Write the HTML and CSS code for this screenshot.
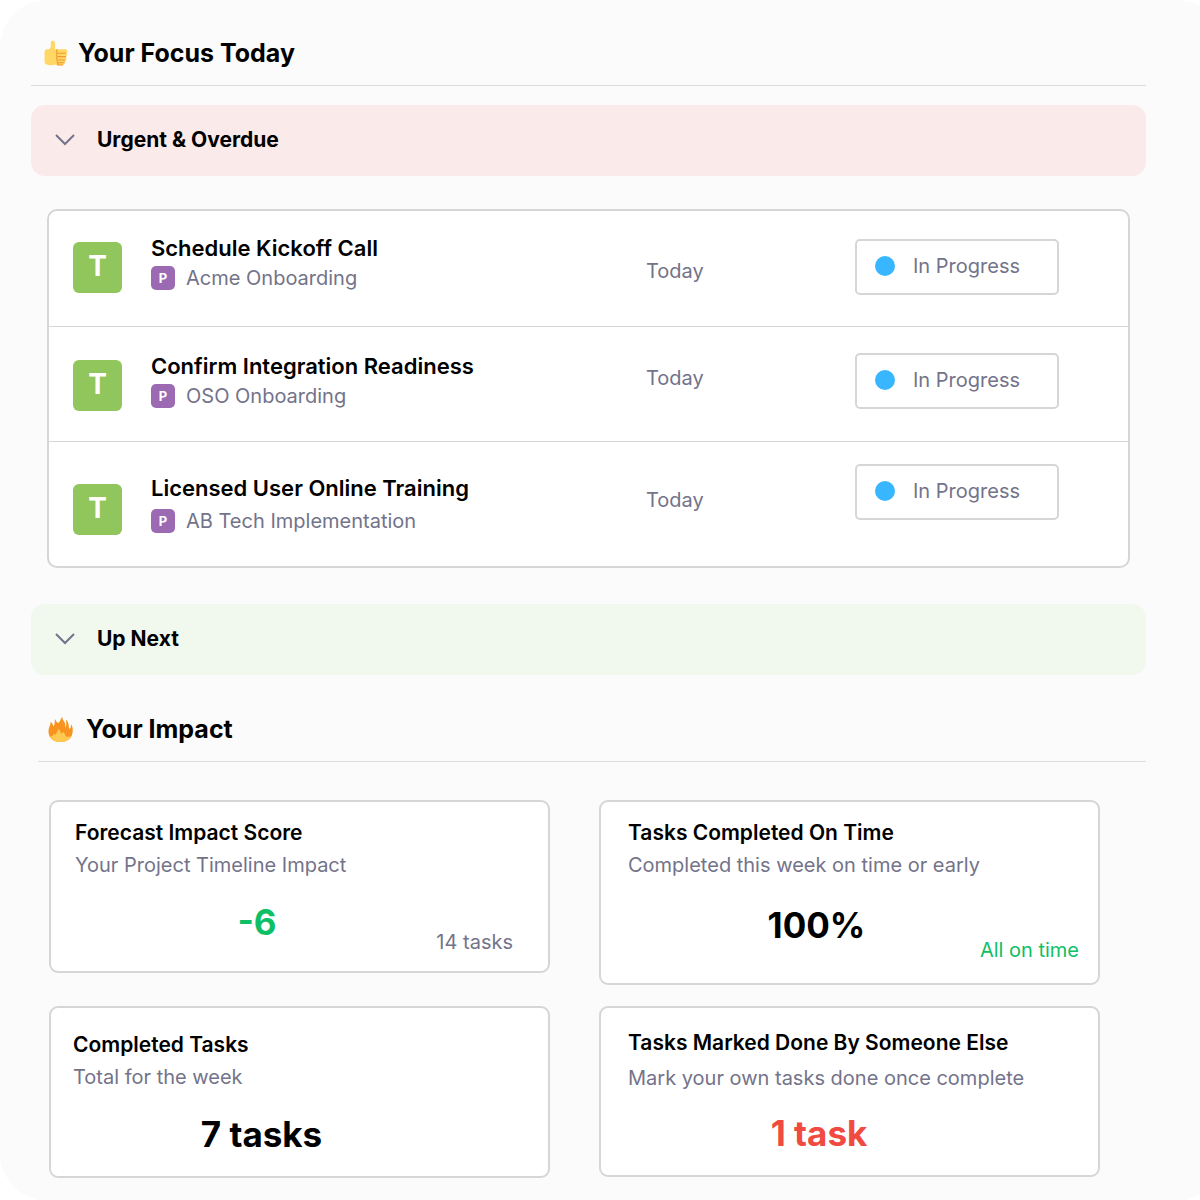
FILE: index.html
```
<!DOCTYPE html>
<html lang="en">
<head>
    <meta charset="UTF-8">
    <meta name="viewport" content="width=device-width, initial-scale=1.0">
    <title>Your Focus Today</title>
    <link rel="stylesheet" href="styles.css">
</head>
<body>
    <main class="panel">
        <!-- Focus Section -->
        <section>
            <header class="section-header">
                <svg class="section-icon" viewBox="0 0 24 24" aria-hidden="true">
                    <path fill="#ffd764" d="M1.500 11.500C1.500 8.800 2.500 8 4 8h1.700C7.100 7 7.500 6 7.500 4.500V1.700C7.500-1 11.600-.8 11.600 2.300V8h9.600c2.800 0 2.900 3.500.9 3.800 1.600.6 1.400 3-.3 3.200 1.400.7 1 2.900-.5 3.100.9.700.5 2.500-.8 2.700.3 1.500-.6 2.400-1.900 2.400H13l-1.300-.7c-1.300.5-3 .7-5 .7-3.700 0-5.200-.9-5.200-3.900Z"/>
                    <path fill="none" stroke="#f29a2e" stroke-width="1" stroke-linecap="round" d="M14 8.500c-1.500.3-1.600 2.700.1 3.200h7.800M14.200 11.800c-1.800.4-1.800 2.800 0 3.200h7.400M14.200 15.200c-1.700.4-1.600 2.600.1 3h6.900M14.500 18.300c-1.500.4-1.300 2.300.2 2.600h5.700M14.500 21c-.8.600-.6 1.800.3 2.100h4"/>
                </svg>
                <h1 class="section-title">Your Focus Today</h1>
            </header>

            <button type="button" class="group-bar urgent" aria-expanded="true" aria-controls="urgentTasks">
                <svg class="chevron" viewBox="0 0 20 12" aria-hidden="true"><path d="M1 1l9 9 9-9"/></svg>
                <span>Urgent &amp; Overdue</span>
            </button>

            <ul class="task-list" id="urgentTasks">
                <li class="task task-first">
                    <div class="task-main">
                        <span class="task-badge">T</span>
                        <div class="task-text">
                            <h2 class="item-title">Schedule Kickoff Call</h2>
                            <p class="project"><span class="project-badge">P</span>Acme Onboarding</p>
                        </div>
                    </div>
                    <span class="task-date">Today</span>
                    <div class="task-status">
                        <button type="button" class="status"><span class="dot"></span>In Progress</button>
                    </div>
                </li>
                <li class="task task-middle">
                    <div class="task-main">
                        <span class="task-badge">T</span>
                        <div class="task-text">
                            <h2 class="item-title">Confirm Integration Readiness</h2>
                            <p class="project"><span class="project-badge">P</span>OSO Onboarding</p>
                        </div>
                    </div>
                    <span class="task-date">Today</span>
                    <div class="task-status">
                        <button type="button" class="status"><span class="dot"></span>In Progress</button>
                    </div>
                </li>
                <li class="task task-last">
                    <div class="task-main">
                        <span class="task-badge">T</span>
                        <div class="task-text">
                            <h2 class="item-title">Licensed User Online Training</h2>
                            <p class="project"><span class="project-badge">P</span>AB Tech Implementation</p>
                        </div>
                    </div>
                    <span class="task-date">Today</span>
                    <div class="task-status">
                        <button type="button" class="status"><span class="dot"></span>In Progress</button>
                    </div>
                </li>
            </ul>

            <button type="button" class="group-bar next" aria-expanded="false">
                <svg class="chevron" viewBox="0 0 20 12" aria-hidden="true"><path d="M1 1l9 9 9-9"/></svg>
                <span>Up Next</span>
            </button>
        </section>

        <!-- Impact Section -->
        <section class="impact">
            <header class="section-header">
                <svg class="section-icon" viewBox="0 0 24 24" aria-hidden="true">
                    <path fill="#f7931e" d="M12 24C5 24 .5 20 .5 14 .5 9.500 2.700 8 2.500 4.500 4 5.600 4.800 7 5 9 6.800 7.500 6.300 4.500 6.700 1.800 7.800 3.200 8.300 5.500 9.600 5.700 11.800 5 11.800 2 13.600-.2c-.2 2.700 1.700 3.800 2.500 5.700.6 1.500.4 3.500.8 5 .9-2 .7-5 .4-8 2.200 2 2.700 5 2.900 9 1.900-.7 2-2.500 1.700-4.700 1.700 2 2 4.500 1.800 7.200C23.400 20 19 24 12 24Z"/>
                    <path fill="#ffc850" d="M12 24c-5.500 0-9-2-9.800-5.500 1.800.2 2.800-.8 3.300-2.500.6.700 1.200.9 2 .7.600-2.200 2-3.200 2.300-5.200 1.900 1 2.300 3 2.900 4.500.8-.3 1.600-.9 1.800-1.800 1.500 1.300 1.800 2.700 2.600 4.300 1.400.8 2.900.5 4.700-.2C20.800 21.800 17.500 24 12 24Z"/>
                </svg>
                <h1 class="section-title">Your Impact</h1>
            </header>

            <div class="cards">
                <article class="card card-score">
                    <h2 class="item-title">Forecast Impact Score</h2>
                    <p class="card-sub">Your Project Timeline Impact</p>
                    <div class="result">
                        <strong class="value good">-6</strong>
                        <span class="note">14 tasks</span>
                    </div>
                </article>
                <article class="card card-ontime">
                    <h2 class="item-title">Tasks Completed On Time</h2>
                    <p class="card-sub">Completed this week on time or early</p>
                    <div class="result">
                        <strong class="value">100%</strong>
                        <span class="note good">All on time</span>
                    </div>
                </article>
                <article class="card card-total">
                    <h2 class="item-title">Completed Tasks</h2>
                    <p class="card-sub">Total for the week</p>
                    <div class="result">
                        <strong class="value">7 tasks</strong>
                    </div>
                </article>
                <article class="card card-other">
                    <h2 class="item-title">Tasks Marked Done By Someone Else</h2>
                    <p class="card-sub">Mark your own tasks done once complete</p>
                    <div class="result">
                        <strong class="value bad">1 task</strong>
                    </div>
                </article>
            </div>
        </section>
    </main>
</body>
</html>
```
FILE: styles.css
```
/* Basic Reset */
* {
    margin: 0;
    padding: 0;
    box-sizing: border-box;
}

body {
    font-family: 'Inter', sans-serif;
    font-size: 20px;
    line-height: 30px;
    color: #73738a;
    background: #fff;
    overflow-x: hidden;
}

button {
    font: inherit;
    color: inherit;
    cursor: pointer;
}

/* Panel runs past the right edge of the window */
.panel {
    min-height: 100vh;
    margin-right: -24px;
    padding: 32px 78px 23px 31px;
    background: #fbfbfb;
    border-radius: 48px;
}

/* Section Headers */
.section-header {
    display: flex;
    align-items: center;
    gap: 10px;
    padding: 1px 12px 11px;
    border-bottom: 1px solid #dcdcdc;
}

.section-icon {
    width: 25px;
    height: 25px;
    overflow: visible;
}

.section-title {
    font-size: 25px;
    line-height: 41px;
    font-weight: 700;
    color: #000;
}

/* Collapsible Bars */
.group-bar {
    display: flex;
    align-items: center;
    gap: 22px;
    width: 100%;
    padding: 19px 24px 21px;
    border: none;
    border-radius: 14px;
    font-size: 21px;
    line-height: 31px;
    font-weight: 700;
    color: #000;
    text-align: left;
}

.urgent {
    margin-top: 19px;
    background: #fbeaea;
}

.next {
    background: #f1f8ee;
}

.chevron {
    width: 20px;
    height: 12px;
    fill: none;
    stroke: #73738a;
    stroke-width: 2;
}

/* Task List */
.task-list {
    margin: 33px 16px 36px;
    list-style: none;
    background: #fff;
    border: 2px solid #d6d6d6;
    border-radius: 10px;
}

.task {
    display: grid;
    grid-template-columns: 1fr 209px 204px;
    padding: 0 69px 0 24px;
}

.task + .task {
    border-top: 1px solid #d6d6d6;
}

.task-main {
    display: flex;
    align-items: center;
    gap: 29px;
}

.task-badge {
    width: 49px;
    height: 51px;
    margin-top: 10px;
    border-radius: 6px;
    background: #90c65b;
    color: #fff;
    font-size: 28px;
    line-height: 48px;
    font-weight: 700;
    text-align: center;
}

.task-text {
    display: grid;
}

.item-title {
    font-size: 22px;
    line-height: 30px;
    font-weight: 600;
    color: #000;
}

.project {
    display: flex;
    align-items: center;
    gap: 11px;
}

.project-badge {
    width: 24px;
    height: 24px;
    border-radius: 5px;
    background: #9c6ab2;
    color: #fff;
    font-size: 13px;
    line-height: 24px;
    font-weight: 700;
    text-align: center;
}

.status {
    display: flex;
    align-items: center;
    gap: 18px;
    width: 100%;
    padding: 10px 18px 12px;
    background: #fff;
    border: 2px solid #d6d6d6;
    border-radius: 5px;
}

.dot {
    width: 20px;
    height: 20px;
    border-radius: 50%;
    background: #38b6ff;
}

/* Row Spacing */
.task-first .task-main {
    padding: 21px 0 33px;
}

.task-first .task-date {
    padding-top: 45px;
}

.task-first .task-status {
    padding-top: 28px;
}

.task-middle .task-main {
    padding: 23px 0 30px;
}

.task-middle .task-date {
    padding-top: 36px;
}

.task-middle .task-status {
    padding-top: 26px;
}

.task-last .task-main {
    padding: 31px 0 30px;
}

.task-last .task-text {
    gap: 3px;
}

.task-last .task-date {
    padding-top: 43px;
}

.task-last .task-status {
    padding-top: 22px;
}

/* Impact Cards */
.impact {
    margin-top: 33px;
    padding-left: 7px;
}

.impact .section-header {
    gap: 13px;
    padding-left: 10px;
}

.cards {
    display: grid;
    grid-template-columns: 1fr 1fr;
    align-items: start;
    gap: 21px 49px;
    margin: 38px 46px 0 11px;
}

.card {
    padding: 16px 24px 18px;
    background: #fff;
    border: 2px solid #d6d6d6;
    border-radius: 9px;
}

.card .item-title {
    font-size: 21px;
}

.card-sub {
    padding-top: 2px;
}

.result {
    display: grid;
    grid-template-columns: 1fr 118px;
    padding-top: 18px;
}

.value {
    padding-left: 44px;
    font-size: 35px;
    line-height: 48px;
    font-weight: 700;
    color: #000;
    text-align: center;
}

.note {
    padding-top: 29px;
    text-align: right;
}

.good {
    color: #0fbf65;
}

.bad {
    color: #f04a41;
}

.card-score {
    padding-right: 35px;
    padding-bottom: 14px;
}

.card-ontime {
    padding-right: 19px;
    padding-left: 27px;
}

.card-ontime .result {
    padding-top: 21px;
}

.card-ontime .note {
    padding-top: 34px;
}

.card-total {
    padding-top: 22px;
    padding-left: 22px;
}

.card-other {
    padding-top: 20px;
    padding-left: 27px;
}

.card-other .card-sub {
    padding-top: 5px;
}

.card-other .result {
    padding-top: 16px;
}

.card-other .value {
    padding-left: 54px;
}
```
